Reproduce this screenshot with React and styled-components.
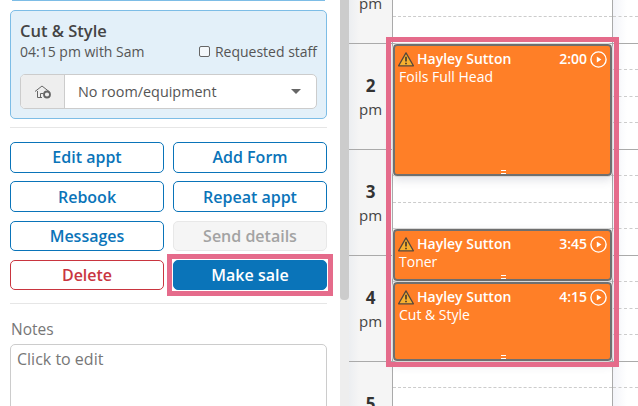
import React from 'react';
import styled, { createGlobalStyle } from 'styled-components';

const Global = createGlobalStyle`
  html, body { margin: 0; padding: 0; background: #fff; }
  body { width: 638px; height: 406px; overflow: hidden; font-family: "Open Sans", "Noto Sans", sans-serif; }
  * { box-sizing: border-box; }
`;

const Page = styled.div`
  display: flex;
  width: 638px;
  height: 406px;
  overflow: hidden;
`;

const Panel = styled.div`
  width: 340px;
  flex: none;
  padding: 0 13px 0 10px;
`;

const PrevCardEdge = styled.div`
  height: 1px;
  margin: 0 2px 9px;
  background: #7dbde6;
`;

const Card = styled.div`
  height: 109px;
  padding: 9px 9px 0;
  background: #e3f0f9;
  border: 1px solid #7dbde6;
  border-radius: 5px;
  color: #555;
`;

const CardTitle = styled.div`
  font-size: 16.5px;
  font-weight: 600;
  line-height: 22px;
  color: #444;
`;

const CardRow = styled.div`
  display: flex;
  justify-content: space-between;
  align-items: center;
  font-size: 14px;
  line-height: 19px;
`;

const CheckLabel = styled.label`
  display: flex;
  align-items: center;
  gap: 5px;
`;

const CheckBox = styled.span`
  width: 11px;
  height: 11px;
  border: 1px solid #666;
  border-radius: 2px;
  background: #f4f8fb;
`;

const Select = styled.div`
  display: flex;
  height: 35px;
  margin-top: 13px;
  background: #fff;
  border: 1px solid #ccc;
  border-radius: 5px;
  overflow: hidden;
`;

const SelectAddon = styled.div`
  width: 44px;
  display: flex;
  align-items: center;
  justify-content: center;
  background: #eee;
  border-right: 1px solid #ccc;
`;

const SelectValue = styled.div`
  flex: 1;
  display: flex;
  align-items: center;
  justify-content: space-between;
  padding: 0 15px 0 13px;
  font-size: 14.4px;
  color: #555;
`;

const Caret = styled.span`
  width: 0;
  height: 0;
  border-left: 5px solid transparent;
  border-right: 5px solid transparent;
  border-top: 5px solid #666;
`;

const Divider = styled.div`
  height: 1px;
  background: #e6e6e6;
  margin-top: ${(p) => p.$top}px;
`;

const ButtonGrid = styled.div`
  display: grid;
  grid-template-columns: 154px 154px;
  grid-auto-rows: 30.5px;
  column-gap: 9px;
  row-gap: 8.8px;
  margin-top: 14px;
`;

const tones = {
  normal: 'color: #0a74b9; background: #fff; border-color: #0a74b9;',
  disabled: 'color: #a3a3a3; background: #f5f5f5; border-color: #e8e8e8;',
  danger: 'color: #c9353f; background: #fff; border-color: #c9353f;',
  primary: 'color: #fff; background: #0a74b9; border-color: #0a74b9;',
};

const Button = styled.button`
  position: relative;
  padding: 0;
  font-family: inherit;
  font-size: 16px;
  font-weight: 600;
  border: 1px solid;
  border-radius: 5px;
  ${(p) => tones[p.$tone || 'normal']}
  ${(p) => p.$marked && `
    &::after {
      content: '';
      position: absolute;
      inset: -7px;
      border: 5px solid #e56b8b;
    }
  `}
`;

const NotesLabel = styled.div`
  margin: 15px 0 5px 1px;
  font-size: 15.5px;
  line-height: 20px;
  color: #777;
`;

const NotesBox = styled.div`
  height: 90px;
  padding: 3px 6px;
  font-size: 16px;
  line-height: 22px;
  color: #777;
  border: 1px solid #ccc;
  border-radius: 5px;
`;

const ScrollTrack = styled.div`
  width: 9px;
  flex: none;
  background: #eee;
`;

const ScrollThumb = styled.div`
  height: 300px;
  background: #ccc;
  border-radius: 0 0 4px 4px;
`;

const Calendar = styled.div`
  position: relative;
  flex: 1;
  display: grid;
  grid-template-columns: 43px 220px 1fr;
  align-content: start;
  margin-top: -62px;
  height: 468px;
`;

const HourLabel = styled.div`
  height: 106px;
  padding-top: 31px;
  text-align: center;
  color: #444;
  background: linear-gradient(90deg, #eceef1 0, #f5f5f5 10px);
  border-bottom: 1px solid #aaa;
`;

const HourNum = styled.div`
  font-size: 17px;
  font-weight: 700;
  line-height: 22px;
  color: #333;
`;

const HourSuffix = styled.div`
  font-size: 15px;
  line-height: 24px;
`;

const HourCell = styled.div`
  display: grid;
  grid-template-rows: repeat(4, 1fr);
  height: 106px;
  border-bottom: 1px solid #aaa;
  border-left: 1px solid #aaa;
  ${(p) => p.$shade && 'background: linear-gradient(90deg, #f3f4f9, #fff 14px);'}
`;

const Slot = styled.div`
  border-bottom: 1px dashed #ccc;
  &:last-child { border-bottom: none; }
`;

const Event = styled.div`
  position: absolute;
  left: 44px;
  width: 219px;
  top: ${(p) => p.$top}px;
  height: ${(p) => p.$height}px;
  padding: 4px 3px 0 3px;
  color: #fff;
  background: #ff7f27;
  border: 2px solid #6f6f6f;
  border-radius: 4px;
  box-shadow: 0 4px 10px rgba(60, 70, 100, 0.16);
  outline: 1px solid #d8d8d8;
`;

const EventHead = styled.div`
  display: flex;
  align-items: center;
  gap: 3px;
  font-size: 14px;
  font-weight: 600;
  line-height: 18px;
`;

const EventTime = styled.span`
  margin-left: auto;
`;

const EventBody = styled.div`
  margin: -1px 0 0 1px;
  font-size: 14px;
  line-height: 19px;
  font-weight: 400;
`;

const Grip = styled.div`
  position: absolute;
  left: 50%;
  bottom: 0;
  width: 5px;
  height: 4px;
  margin-left: -2px;
  border-top: 1px solid #fff;
  border-bottom: 1px solid #fff;
`;

const Highlight = styled.div`
  position: absolute;
  left: 37px;
  top: 99px;
  width: 233px;
  height: 330px;
  border: 5.5px solid #e56b8b;
  pointer-events: none;
`;

function WarningIcon() {
  return (
    <svg width="16" height="15" viewBox="0 0 16 15" style={{ flex: 'none' }}>
      <path d="M8 0.9 L15.4 13.8 H0.6 Z" fill="#f7b02f" stroke="#54483c" strokeWidth="1.3" strokeLinejoin="round" />
      <path d="M8 4.8 V9.6 M8 10.8 V12.2" stroke="#40342a" strokeWidth="1.6" />
    </svg>
  );
}

function PlayIcon() {
  return (
    <svg width="17" height="17" viewBox="0 0 17 17" style={{ flex: 'none' }}>
      <circle cx="8.5" cy="8.5" r="7.6" fill="none" stroke="#fff" strokeWidth="1.4" />
      <path d="M6.8 5.6 L11.4 8.5 L6.8 11.4 Z" fill="#fff" />
    </svg>
  );
}

function RoomIcon() {
  return (
    <svg width="18" height="14" viewBox="0 0 18 14">
      <path d="M1 6.5 L8 1 L15 6.5" fill="none" stroke="#666" strokeWidth="1" />
      <path d="M3.5 6 V12.5 M3.5 12.5 H8 M6.5 12.5 V8.5 H9.5" fill="none" stroke="#666" strokeWidth="1" />
      <circle cx="13" cy="9.5" r="3" fill="none" stroke="#666" strokeWidth="1.8" />
    </svg>
  );
}

const hours = [
  { n: '1', s: 'pm' },
  { n: '2', s: 'pm' },
  { n: '3', s: 'pm' },
  { n: '4', s: 'pm' },
  { n: '5', s: 'pm' },
];

const events = [
  { time: '2:00', name: 'Foils Full Head', top: 106, height: 132 },
  { time: '3:45', name: 'Toner', top: 291, height: 52 },
  { time: '4:15', name: 'Cut & Style', top: 344, height: 79 },
];

export default function App() {
  return (
    <Page>
      <Global />
      <Panel>
        <PrevCardEdge />
        <Card>
          <CardTitle>Cut &amp; Style</CardTitle>
          <CardRow>
            <span>04:15 pm with Sam</span>
            <CheckLabel><CheckBox />Requested staff</CheckLabel>
          </CardRow>
          <Select>
            <SelectAddon><RoomIcon /></SelectAddon>
            <SelectValue>No room/equipment<Caret /></SelectValue>
          </Select>
        </Card>
        <Divider $top={8} />
        <ButtonGrid>
          <Button>Edit appt</Button>
          <Button>Add Form</Button>
          <Button>Rebook</Button>
          <Button>Repeat appt</Button>
          <Button>Messages</Button>
          <Button $tone="disabled">Send details</Button>
          <Button $tone="danger">Delete</Button>
          <Button $tone="primary" $marked>Make sale</Button>
        </ButtonGrid>
        <Divider $top={13} />
        <NotesLabel>Notes</NotesLabel>
        <NotesBox>Click to edit</NotesBox>
      </Panel>
      <ScrollTrack><ScrollThumb /></ScrollTrack>
      <Calendar>
        {hours.map((h) => (
          <React.Fragment key={h.n}>
            <HourLabel>
              <HourNum>{h.n}</HourNum>
              <HourSuffix>{h.s}</HourSuffix>
            </HourLabel>
            <HourCell>
              <Slot /><Slot /><Slot /><Slot />
            </HourCell>
            <HourCell $shade>
              <Slot /><Slot /><Slot /><Slot />
            </HourCell>
          </React.Fragment>
        ))}
        {events.map((e) => (
          <Event key={e.time} $top={e.top} $height={e.height}>
            <EventHead>
              <WarningIcon />
              <span>Hayley Sutton</span>
              <EventTime>{e.time}</EventTime>
              <PlayIcon />
            </EventHead>
            <EventBody>{e.name}</EventBody>
            <Grip />
          </Event>
        ))}
        <Highlight />
      </Calendar>
    </Page>
  );
}
